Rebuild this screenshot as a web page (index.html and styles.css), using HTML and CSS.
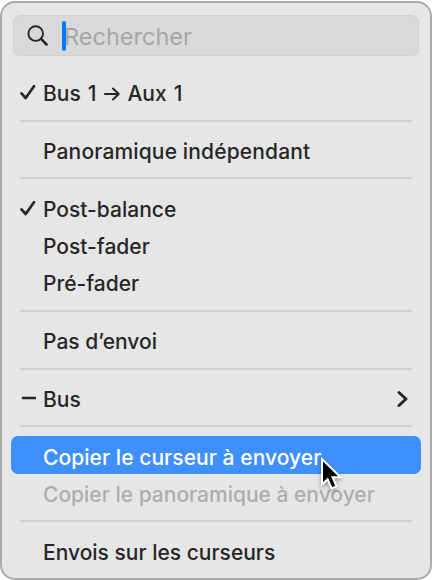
FILE: index.html
```html
<!DOCTYPE html>
<html lang="fr">
<head>
  <meta charset="UTF-8" />
  <meta name="viewport" content="width=device-width, initial-scale=1.0"/>
  <title>Menu d’envoi</title>
  <link rel="stylesheet" href="styles.css">
</head>
<body>
  <div class="menu">
    <div class="search">
      <svg class="loupe" width="22" height="22" viewBox="0 0 22 22">
        <circle cx="8.7" cy="8.6" r="7.3" />
        <path class="handle" d="M14 13.9L19.6 19.5" />
      </svg>
      <span class="caret"></span>
      <span class="placeholder">Rechercher</span>
    </div>

    <div class="item">
      <svg class="mark" width="16" height="16" viewBox="0 0 16 16"><path d="M1.5 8.4L5.7 13L14 1.2" /></svg>
      <span class="route">Bus 1 <svg class="arrow" width="17" height="14" viewBox="0 0 17 14"><path d="M2 7H15.5M10 1.5L15.7 7L10 12.5" /></svg> Aux 1</span>
    </div>
    <hr>
    <div class="item"><span class="wide">Panoramique indépendant</span></div>
    <hr>
    <div class="item">
      <svg class="mark" width="16" height="16" viewBox="0 0 16 16"><path d="M1.5 8.4L5.7 13L14 1.2" /></svg>
      <span>Post-balance</span>
    </div>
    <div class="item"><span>Post-fader</span></div>
    <div class="item"><span>Pré-fader</span></div>
    <hr>
    <div class="item"><span>Pas d’envoi</span></div>
    <hr>
    <div class="item">
      <svg class="mark" width="16" height="16" viewBox="0 0 16 16"><path d="M3 7H15" /></svg>
      <span>Bus</span>
      <svg class="chevron" width="12" height="18" viewBox="0 0 12 18"><path d="M2 2.5L9 9L2 15.5" /></svg>
    </div>
    <hr>
    <div class="item selected">
      <span>Copier le curseur à envoyer</span>
      <svg class="pointer" width="26" height="36" viewBox="0 0 26 36">
        <path d="M2 2V27.5L7.6 22.3L11.6 31.4L16.5 29.3L12.6 20.2H20.6Z" />
      </svg>
    </div>
    <div class="item disabled"><span>Copier le panoramique à envoyer</span></div>
    <hr>
    <div class="item"><span>Envois sur les curseurs</span></div>
  </div>
</body>
</html>
```
FILE: styles.css
```css
body {
  margin: 0;
  padding-top: 1px;
  background: #fff;
  font-family: Inter, "Liberation Sans", sans-serif;
  color: #262626;
}
.menu {
  box-sizing: border-box;
  width: 432px;
  height: 579px;
  padding: 12px 9px 0;
  background: #e6e6e6;
  border: 2px solid #aaacaa;
  border-radius: 15px;
}
svg {
  fill: none;
  stroke: #262626;
  stroke-linecap: round;
  stroke-linejoin: round;
  flex: none;
}
.search {
  display: flex;
  align-items: center;
  box-sizing: border-box;
  height: 41px;
  margin: 0 2px 17px 2px;
  padding: 2px 0 0 13px;
  background: #d9d9d9;
  border: 1px solid #d1d1d1;
  border-radius: 7px;
}
.loupe {
  margin-bottom: 1px;
  stroke-width: 1.9;
}
.handle {
  stroke-width: 2.5;
}
.caret {
  width: 4px;
  height: 30px;
  margin: 0 -2px 2px 13px;
  border-radius: 2px;
  background: #007aff;
}
.placeholder {
  font-size: 23.5px;
  color: #a6a6a6;
}
.item {
  position: relative;
  display: flex;
  align-items: center;
  box-sizing: border-box;
  height: 37.4px;
  padding: 5px 12px 0 32px;
  border-radius: 7px;
  font-size: 21px;
  font-weight: 500;
  line-height: 30px;
  white-space: nowrap;
}
.mark {
  width: 16px;
  margin: 0 7px 2px -23px;
  stroke-width: 2.7;
}
.route {
  word-spacing: 1.4px;
}
.wide {
  letter-spacing: 0.15px;
}
.arrow {
  stroke-width: 2;
}
.chevron {
  margin: 0 0 2px auto;
  stroke-width: 3;
}
hr {
  height: 2px;
  margin: 9.2px 9px 9.15px 9px;
  border: 0;
  background: #cfcfcf;
}
.selected {
  padding-top: 6px;
  background: #408fff;
  color: #fff;
  letter-spacing: 0.06px;
}
.disabled {
  color: #adadad;
}
/* mouse pointer resting on the selected row */
.pointer {
  position: absolute;
  left: 309px;
  top: 21px;
  z-index: 1;
  fill: #000;
  stroke: #fff;
  stroke-width: 2;
  stroke-linejoin: miter;
  filter: drop-shadow(0 2px 2px rgba(0,0,0,0.35));
}
```
